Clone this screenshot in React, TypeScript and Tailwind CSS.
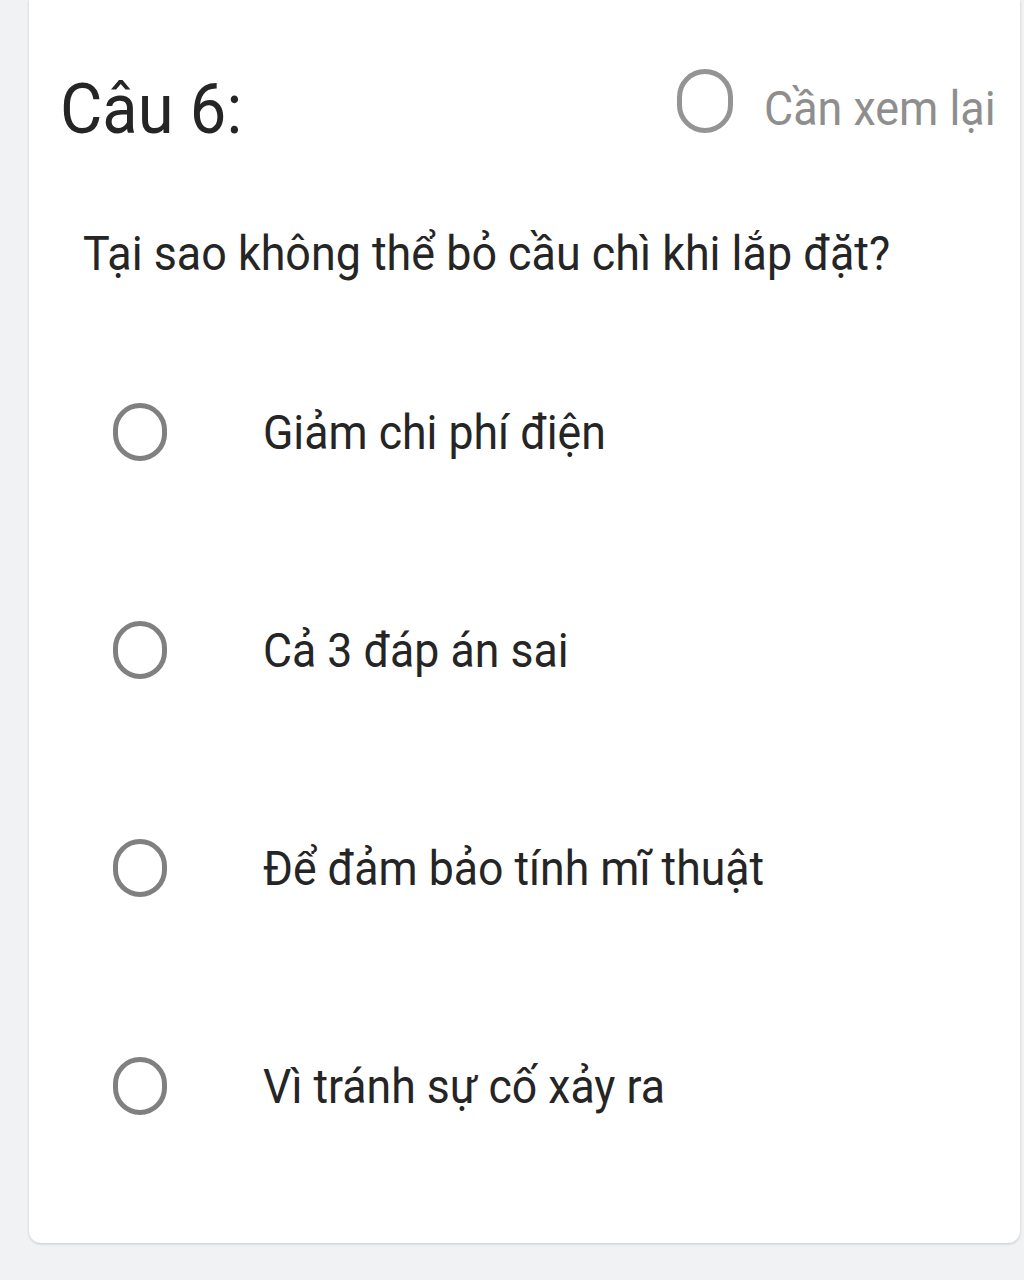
const OPTIONS = [
  "Giảm chi phí điện",
  "Cả 3 đáp án sai",
  "Để đảm bảo tính mĩ thuật",
  "Vì tránh sự cố xảy ra",
];

function Radio({ className = "" }: { className?: string }) {
  return (
    <span
      className={`block shrink-0 rounded-full border-[5px] border-[#808080] bg-white ${className}`}
    />
  );
}

export default function App() {
  return (
    <div className="h-[1280px] w-[1024px] overflow-hidden bg-[#f1f2f4] pl-[29px] pr-[4px] font-['Roboto',sans-serif] text-[#252525]">
      <div className="h-[1243px] rounded-b-[12px] bg-white pl-[31px] pt-[74px] shadow-[0_1px_3px_rgba(0,0,0,0.18)]">
        <div className="flex items-start">
          <h2 className="w-[617px] shrink-0 text-[70px] leading-none">
            <span className="inline-block origin-left scale-x-[0.93]">Câu 6:</span>
          </h2>
          <Radio className="-mt-[5px] h-[64px] w-[56px] border-[#949494]" />
          <span className="ml-[31px] mt-[10px] inline-block origin-left scale-x-[0.915] whitespace-nowrap text-[49px] leading-none text-[#8e8e8e]">
            Cần xem lại
          </span>
        </div>

        <p className="ml-[23px] mt-[85px] whitespace-nowrap text-[49px] leading-none">
          <span className="inline-block origin-left scale-x-[0.915]">
            Tại sao không thể bỏ cầu chì khi lắp đặt?
          </span>
        </p>

        <ul className="ml-[53px] mt-[125px] flex flex-col gap-[160px]">
          {OPTIONS.map((opt) => (
            <li key={opt} className="flex h-[58px] items-center">
              <Radio className="h-[58px] w-[54px]" />
              <span className="ml-[96px] inline-block origin-left scale-x-[0.91] whitespace-nowrap text-[49px] leading-none">
                {opt}
              </span>
            </li>
          ))}
        </ul>
      </div>
    </div>
  );
}
